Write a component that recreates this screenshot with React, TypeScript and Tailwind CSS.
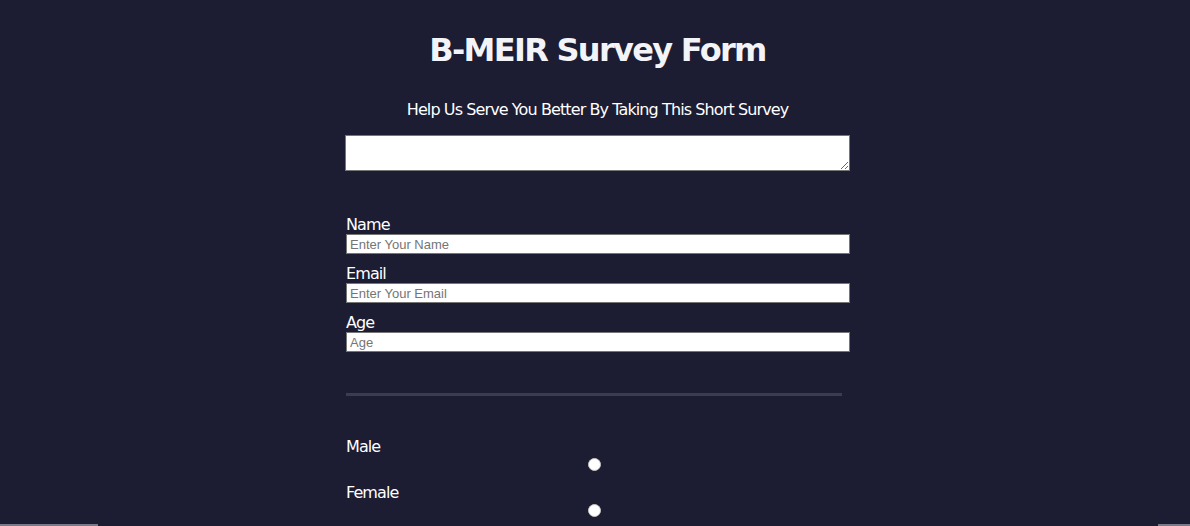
import React from "react";

export default function App() {
  const fields = [
    { label: "Name", ph: "Enter Your Name" },
    { label: "Email", ph: "Enter Your Email" },
    { label: "Age", ph: "Age" },
  ];
  return (
    <div className="relative h-[526px] w-full overflow-hidden bg-[#1c1c33] text-white [font-family:'DejaVu_Sans',sans-serif]">
      <div className="ml-[345px] w-[505px]">
        <h1 className="pt-[28px] text-center text-[32px] font-bold leading-[44px] tracking-[-1.7px] text-[#f3f4f8]">
          B-MEIR Survey Form
        </h1>
        <p className="mt-[28px] text-center text-[16px] leading-[20px] tracking-[-0.9px]">
          Help Us Serve You Better By Taking This Short Survey
        </p>
        <textarea className="mt-[15px] block h-[36px] w-[505px] border border-[#767676] bg-white" />
        <div className="mt-[45px] flex flex-col gap-[11px] pl-[1px]">
          {fields.map((f) => (
            <div key={f.label} className="flex flex-col">
              <label className="text-[16px] leading-[18px] tracking-[-0.9px]">{f.label}</label>
              <input
                placeholder={f.ph}
                className="h-[20px] w-[504px] border border-[#767676] bg-white px-[3px] text-[13px] text-black placeholder:text-[#757575] [font-family:'Liberation_Sans',sans-serif]"
              />
            </div>
          ))}
        </div>
        <div className="mt-[41px] ml-[1px] h-[3px] w-[496px] bg-[#3b3b52]" />
        <div className="mt-[42px] flex flex-col pl-[1px]">
          <label className="text-[16px] leading-[18px] tracking-[-0.9px]">Male</label>
          <div className="mt-[2px] ml-[242px] h-[13px] w-[13px] rounded-full border border-[#c8c8c8] bg-white" />
          <label className="mt-[13px] text-[16px] leading-[18px] tracking-[-0.9px]">Female</label>
          <div className="mt-[2px] ml-[242px] h-[13px] w-[13px] rounded-full border border-[#c8c8c8] bg-white" />
        </div>
      </div>
      <div className="absolute bottom-0 left-0 h-[2px] w-[98px] bg-[#7a7a86]" />
      <div className="absolute bottom-0 right-0 h-[2px] w-[32px] bg-[#7a7a86]" />
    </div>
  );
}
